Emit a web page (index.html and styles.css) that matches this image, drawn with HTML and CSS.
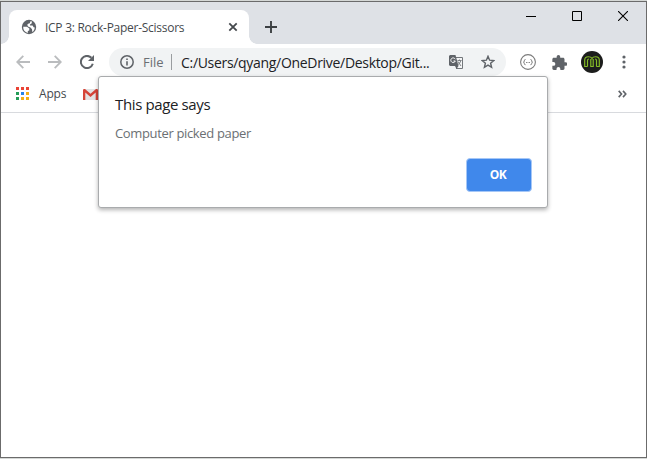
FILE: index.html
```html
<!DOCTYPE html>
<html lang="en">
<head>
<meta charset="utf-8">
<title>ICP 3: Rock-Paper-Scissors</title>
<link rel="stylesheet" href="styles.css">
</head>
<body>
<div class="window">
  <header class="titlebar">
    <div class="tab">
      <svg class="globe" width="16" height="16" viewBox="0 0 16 16"><circle cx="8" cy="8" r="7.200" fill="#5f6368"/><path d="M2.200 7.800 6 7.800 8.400 9.400 8.200 11.400 6.800 12 6.800 14C3.800 13.200 2 11 2.200 7.800zM9.400 2.200 11 2.400 10.600 4.400 9 5.400 9 6.400 11.600 6.600 12.600 8.200 13.800 8.400C13.400 11 12.400 12.300 11.300 13L11 10.200 9.500 8.600 7 7.400 6.200 5.800 7.200 4.800 8.800 4.200z" fill="#fff"/></svg>
      <span class="tab-title">ICP 3: Rock-Paper-Scissors</span>
      <svg class="tab-close" width="10" height="10" viewBox="0 0 10 10"><path d="M1.300 1.300 8.700 8.700M8.700 1.300 1.300 8.700" stroke="#45494d" stroke-width="1.800"/></svg>
    </div>
    <svg class="new-tab" width="12" height="12" viewBox="0 0 12 12"><path d="M6 0V12M0 6H12" stroke="#3c4043" stroke-width="1.900"/></svg>
    <div class="controls">
      <svg width="10" height="10" viewBox="0 0 10 10"><path d="M0 5.500H10" stroke="#000"/></svg>
      <svg width="10" height="10" viewBox="0 0 10 10"><path d="M.5.5H9.500V9.500H.5z" fill="none" stroke="#000"/></svg>
      <svg width="10" height="10" viewBox="0 0 10 10"><path d="M0 0 10 10M10 0 0 10" stroke="#000" stroke-width="1.100"/></svg>
    </div>
  </header>
  <nav class="toolbar">
    <svg class="back" width="14" height="14" viewBox="0 0 14 14"><path d="M14 7H1.500M7.300.8 1.200 7 7.300 13.200" fill="none" stroke="#babcbe" stroke-width="1.800"/></svg>
    <svg class="forward" width="14" height="14" viewBox="0 0 14 14"><path d="M0 7H12.500M6.700.8 12.800 7 6.700 13.200" fill="none" stroke="#babcbe" stroke-width="1.800"/></svg>
    <svg class="reload" width="14" height="14" viewBox="0 0 14 14"><path d="M12.800 8.800A6.100 6.100 0 1 1 11.400 2.800" fill="none" stroke="#5f6368" stroke-width="2"/><path d="M14 0V6H8z" fill="#5f6368"/></svg>
    <div class="omnibox">
      <svg class="info" width="14" height="14" viewBox="0 0 14 14"><circle cx="7" cy="7" r="6.200" fill="none" stroke="#5f6368" stroke-width="1.500"/><path d="M7 6.200V10.500M7 3.500V5" stroke="#5f6368" stroke-width="1.600"/></svg>
      <span class="scheme">File</span>
      <i class="divider"></i>
      <span class="url">C:/Users/qyang/OneDrive/Desktop/Git...</span>
      <svg class="translate" width="14" height="14" viewBox="0 0 14 14"><path d="M7 2.500H13.500V13.500H7" fill="#f4f5f6" stroke="#73777b"/><path d="M0 1 1 0H6.500L9.500 11H1L0 10z" fill="#5f6368"/><path d="M6.200 4.200A2.300 2.300 0 1 0 6.300 6H4.500" fill="none" stroke="#fff"/><path d="M8.500 5.500H12.500M10.500 4.500V5.500M12 5.500Q11 8.500 8.500 10M9 6.500 12 11" fill="none" stroke="#73777b" stroke-width=".9"/><path d="M6 11H9.500L7.500 14z" fill="#5f6368"/></svg>
      <svg class="star" width="14" height="14" viewBox="0 0 14 14"><path d="M7 1.300 8.600 5.200 12.800 5.500 9.600 8.200 10.600 12.300 7 10.100 3.400 12.300 4.400 8.200 1.200 5.500 5.400 5.200z" fill="none" stroke="#5f6368" stroke-width="1.400"/></svg>
    </div>
    <svg class="json" width="16" height="16" viewBox="0 0 16 16"><circle cx="8" cy="8" r="7.400" fill="#fff" stroke="#7b7b7b" stroke-width="1.100"/><path d="M5.500 5.500Q4.300 5.500 4.300 6.800T3.500 8.200Q4.300 8.200 4.300 9.500T5.500 10.700M10.500 5.500Q11.700 5.500 11.700 6.800T12.500 8.200Q11.700 8.200 11.700 9.500T10.500 10.700" fill="none" stroke="#7b7b7b"/><path d="M6 8.500H10" stroke="#888" stroke-dasharray="1 .5"/></svg>
    <svg class="puzzle" width="15" height="15" viewBox="1.500 1 21 21"><path fill="#5f6368" d="M20.500 11H19V7c0-1.100-.9-2-2-2h-4V3.500a2.500 2.500 0 0 0-5 0V5H4c-1.100 0-2 .9-2 2v3.800h1.500a2.700 2.700 0 0 1 0 5.400H2V20c0 1.100.9 2 2 2h3.800v-1.500a2.700 2.700 0 0 1 5.400 0V22H17c1.100 0 2-.9 2-2v-4h1.500a2.500 2.500 0 0 0 0-5z"/></svg>
    <svg class="avatar" width="22" height="22" viewBox="0 0 22 22"><circle cx="11" cy="11" r="11" fill="#1c1d1c"/><path d="M6.500 15.500H3.700V9Q3.700 5.700 7.300 5.700 10.200 5.700 11 7.500 11.800 5.700 14.700 5.700 18.300 5.700 18.300 9V15.500H15.500M6.500 15.500V9.500Q6.500 8 8 8M15.500 15.500V9.500Q15.500 8 14 8M9.800 8V15.500H12.200V8" fill="none" stroke="#86bd27" stroke-width="1.150"/></svg>
    <svg class="menu" width="4" height="14" viewBox="0 0 4 14"><g fill="#5f6368"><circle cx="2" cy="2" r="1.600"/><circle cx="2" cy="7" r="1.600"/><circle cx="2" cy="12" r="1.600"/></g></svg>
  </nav>
  <div class="bookmarks">
    <div class="apps-grid"><i class="r"></i><i class="r"></i><i class="r"></i><i class="g"></i><i class="b"></i><i class="y"></i><i class="g"></i><i class="y"></i><i class="y"></i></div>
    <span class="apps">Apps</span>
    <svg class="gmail" width="15" height="11" viewBox="0 0 15 11"><path d="M1 0H14V11H1z" fill="#e3e3e3"/><path d="M0 1Q0 0 1.200 0H2L7.500 4.800 13 0H13.800Q15 0 15 1V11H12.700V3.500L7.500 8 2.300 3.500V11H0z" fill="#d54438"/></svg>
    <svg class="more" width="9" height="8" viewBox="0 0 9 8"><path d="M.7.900 3.500 4 .7 7.100M5 .900 7.800 4 5 7.100" fill="none" stroke="#5f6368" stroke-width="1.600"/></svg>
  </div>
  <main class="page"></main>
  <div class="dialog" role="dialog">
    <h1><span>This page says</span></h1>
    <p><span>Computer picked paper</span></p>
    <button>OK</button>
  </div>
</div>
</body>
</html>
```
FILE: styles.css
```css
* { box-sizing: border-box; }
body {
  margin: 0;
  height: 459px;
  padding: 1px 0;
  overflow: hidden;
  background: #d5d8d6;
  font-family: "Open Sans", "Noto Sans", sans-serif;
}
svg { display: block; flex: none; }
span { white-space: nowrap; }
.window {
  position: relative;
  height: 457px;
  border: 1px solid #6b6b6b;
  background: #fff;
  display: flex;
  flex-direction: column;
}
.titlebar {
  height: 42px;
  flex: none;
  display: flex;
  background: #dee1e6;
}
.tab {
  position: relative;
  width: 240px;
  height: 34px;
  margin: 8px 0 0 8px;
  padding: 0 11px 0 12px;
  border-radius: 8px 8px 0 0;
  background: #fff;
  display: flex;
  align-items: center;
}
.tab::before, .tab::after {
  content: "";
  position: absolute;
  bottom: 0;
  width: 8px;
  height: 8px;
}
.tab::before { left: -8px; background: radial-gradient(circle at 0 0, transparent 7.500px, #fff 8px); }
.tab::after { right: -8px; background: radial-gradient(circle at 100% 0, transparent 7.500px, #fff 8px); }
.tab-title { margin-left: 8px; font-size: 12px; letter-spacing: -0.270px; color: #45494d; }
.tab-close { margin-left: auto; }
.new-tab { margin: 19px 0 0 16px; }
.controls { margin: 9px 18px 0 auto; display: flex; gap: 36px; }
.toolbar {
  height: 36px;
  flex: none;
  display: flex;
  align-items: center;
  padding-left: 15px;
}
.forward { margin-left: 18px; }
.reload { margin-left: 18px; }
.omnibox {
  width: 397px;
  height: 28px;
  margin-left: 15px;
  padding: 0 11px;
  border-radius: 14px;
  background: #f1f3f4;
  display: flex;
  align-items: center;
  font-size: 14px;
}
.scheme { width: 20px; margin-left: 9px; color: #6b6f73; font-size: 13px; letter-spacing: 0; }
.divider { width: 1px; height: 16px; margin-left: 8px; background: #9a9da0; }
.url { width: 249px; margin-left: 9px; color: #202124; letter-spacing: -0.310px; }
.translate { margin-left: 19px; }
.star { margin-left: 18px; }
.json { margin-left: 14px; }
.puzzle { margin-left: 16px; }
.avatar { margin-left: 14px; }
.menu { margin-left: 19px; }
.bookmarks {
  height: 33px;
  flex: none;
  display: flex;
  align-items: center;
  padding: 0 19px 5px 15px;
  border-bottom: 1px solid #d8dade;
}
.apps-grid { display: grid; grid-template-columns: repeat(3, 3px); grid-auto-rows: 3px; gap: 2px; }
.r { background: #ea4335; }
.g { background: #249c57; }
.b { background: #2684e8; }
.y { background: #f4af13; }
.apps { margin-left: 10px; width: 27px; font-size: 12px; letter-spacing: -0.200px; color: #45494d; }
.gmail { margin: 1px 0 0 17px; }
.more { margin-left: auto; }
.page { flex: 1; background: #fff; }
.dialog {
  position: absolute;
  left: 97px;
  top: 74px;
  width: 450px;
  height: 132px;
  padding: 17px 16px;
  border: 1px solid #a9abad;
  border-radius: 3px;
  background: #fff;
  box-shadow: 0 2px 4px rgba(0, 0, 0, .3);
}
.dialog h1 { margin: 0; font-size: 15px; line-height: 20px; font-weight: 400; letter-spacing: -0.370px; color: #202124; }
.dialog p { margin: 10px 0 0; font-size: 13px; line-height: 18px; letter-spacing: -0.350px; color: #6b6f73; }
.dialog button {
  display: block;
  width: 66px;
  height: 34px;
  margin: 16px -1px 0 auto;
  padding: 0 2px 1px 0;
  border: 1px solid #a5c7f7;
  border-radius: 4px;
  background: #4088eb;
  color: #fff;
  font: 700 12px "Open Sans", sans-serif;
  letter-spacing: -0.400px;
}
```
